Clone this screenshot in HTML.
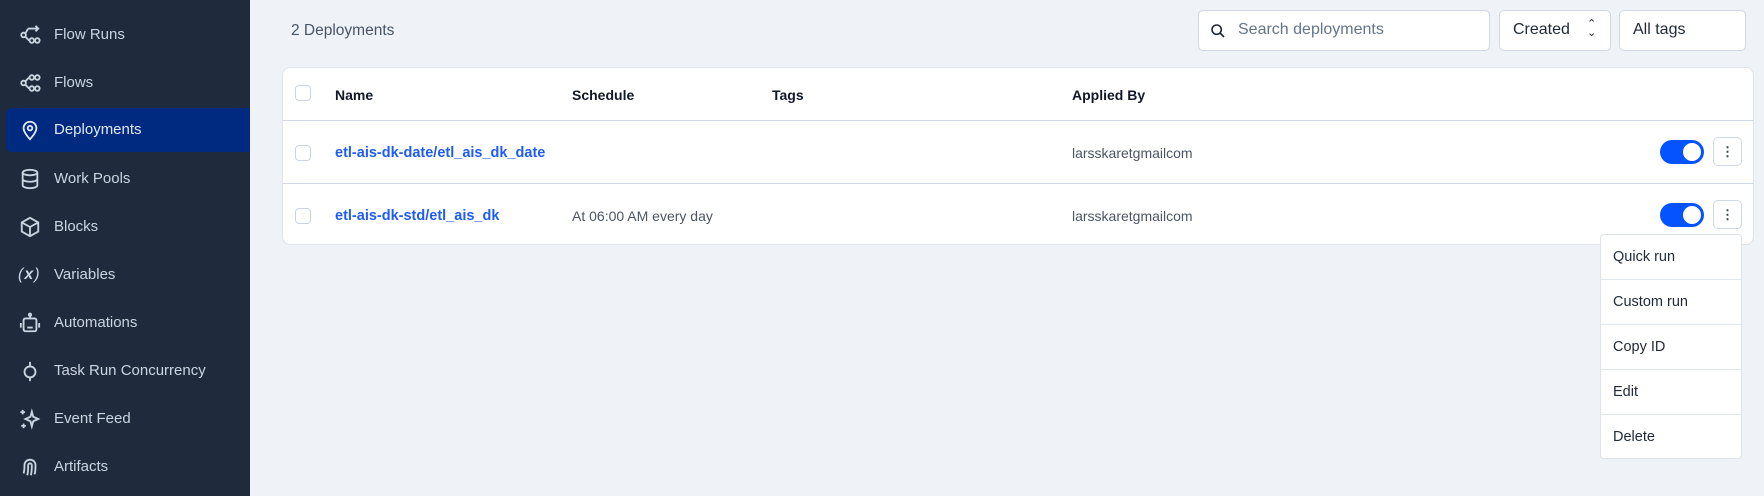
<!DOCTYPE html>
<html><head><style>
*{box-sizing:border-box;margin:0;padding:0}
body{width:1764px;height:496px;overflow:hidden;background:#eff3f8;font-family:"Liberation Sans",sans-serif;position:relative}
.sb{position:absolute;left:0;top:0;width:250px;height:496px;background:#1f2a3c}
.it{position:absolute;left:6px;width:244px;height:44px;color:#cbd5e1;font-size:15px;line-height:44px;padding-left:48px}
.it.act{background:#002a7f;border-radius:6px 0 0 6px;color:#e2e8f0}
.it svg{position:absolute;left:13px;top:11px}
.abs{position:absolute}
.box{position:absolute;background:#fff;border:1px solid #cfd8e3;border-radius:5px;font-size:16px;color:#1f2937}
.card{position:absolute;left:282px;top:67px;width:1472px;height:178px;background:#fff;border:1px solid #dde3ea;border-radius:8px}
.hr{position:absolute;left:0;right:0;height:1px;background:#cfd8e3}
.cb{position:absolute;left:12px;width:16px;height:16px;border:1px solid #cbd5e1;border-radius:4px}
.th{position:absolute;font-size:14px;font-weight:bold;color:#111827}
.td{position:absolute;font-size:14px;color:#4b5563}
.lk{position:absolute;font-size:14.5px;font-weight:bold;color:#1f5bf5}
.tg{position:absolute;width:44px;height:24px;border-radius:12px;background:#0553ff}
.tg::after{content:"";position:absolute;right:3px;top:3px;width:18px;height:18px;border-radius:50%;background:#fff}
.kb{position:absolute;width:29px;height:29px;border:1px solid #cfd8e3;border-radius:5px;background:#fff;color:#334155;font-size:13px;text-align:center;line-height:27px;font-weight:bold}
.menu{position:absolute;left:1600px;top:234px;width:142px;height:225px;background:#fff;border:1px solid #dde3ea;border-radius:4px}
.mi{height:45px;line-height:45px;padding-left:12px;font-size:14.5px;color:#1f2937;border-bottom:1px solid #e2e8f0}
.mi:last-child{border-bottom:none}
</style></head><body>
<div class="sb">
<div class="it" style="top:13px"><svg width="22" height="22" viewBox="0 0 24 24" fill="none" stroke="#cbd5e1" stroke-width="2"><circle cx="5" cy="12" r="2.5"/><circle cx="14" cy="18" r="2.5"/><circle cx="20" cy="18" r="2.5"/><path d="M10 5h11M18 2l3 3-3 3M7 10l3-5M7 14l4 4"/></svg>Flow Runs</div>
<div class="it" style="top:61px"><svg width="22" height="22" viewBox="0 0 24 24" fill="none" stroke="#cbd5e1" stroke-width="2"><circle cx="5" cy="12" r="2.5"/><circle cx="14" cy="6" r="2.5"/><circle cx="20" cy="6" r="2.5"/><circle cx="14" cy="18" r="2.5"/><circle cx="20" cy="18" r="2.5"/><path d="M7 10l4-4M7 14l4 4"/></svg>Flows</div>
<div class="it act" style="top:108px"><svg width="22" height="22" viewBox="0 0 24 24" fill="none" stroke="#e2e8f0" stroke-width="2"><path d="M12 22s-7-7-7-12a7 7 0 0114 0c0 5-7 12-7 12z"/><circle cx="12" cy="10" r="2.5"/></svg>Deployments</div>
<div class="it" style="top:157px"><svg width="22" height="22" viewBox="0 0 24 24" fill="none" stroke="#cbd5e1" stroke-width="2"><ellipse cx="12" cy="5" rx="8" ry="3"/><path d="M4 5v14c0 1.7 3.6 3 8 3s8-1.3 8-3V5M4 12c0 1.7 3.6 3 8 3s8-1.3 8-3"/></svg>Work Pools</div>
<div class="it" style="top:205px"><svg width="22" height="22" viewBox="0 0 24 24" fill="none" stroke="#cbd5e1" stroke-width="2"><path d="M12 2l9 5v10l-9 5-9-5V7z M3 7l9 5 9-5M12 12v10"/></svg>Blocks</div>
<div class="it" style="top:253px"><span class="abs" style="left:12px;top:0;font-size:16px;color:#cbd5e1;font-style:italic;letter-spacing:1px">(<b>x</b>)</span>Variables</div>
<div class="it" style="top:301px"><svg width="22" height="22" viewBox="0 0 24 24" fill="none" stroke="#cbd5e1" stroke-width="2"><rect x="5" y="7" width="14" height="14" rx="2"/><circle cx="12" cy="3" r="1.3"/><path d="M12 4v3M2 12v5M22 12v5M9 12h.01M15 12h.01M9 17h6"/></svg>Automations</div>
<div class="it" style="top:349px"><svg width="22" height="22" viewBox="0 0 24 24" fill="none" stroke="#cbd5e1" stroke-width="2"><circle cx="12" cy="13" r="6"/><path d="M12 2v5M12 19v4"/></svg>Task Run Concurrency</div>
<div class="it" style="top:397px"><svg width="22" height="22" viewBox="0 0 24 24" fill="none" stroke="#cbd5e1" stroke-width="2"><path d="M14 4l1.5 5.5L21 12l-5.5 2.5L14 20l-1.5-5.5L7 12l5.5-2.5z M4 2v5M1.5 4.5h5M5 17v5M2.5 19.5h5"/></svg>Event Feed</div>
<div class="it" style="top:445px"><svg width="22" height="22" viewBox="0 0 24 24" fill="none" stroke="#cbd5e1" stroke-width="2"><path d="M5 19c1-3 1-6 1-9a6 6 0 0112 0c0 4 0 7-1 10M9 21c1-3 1-7 1-11a2 2 0 014 0c0 4 0 7-1 11"/></svg>Artifacts</div>
</div>
<div class="abs" style="left:291px;top:22px;font-size:15.5px;color:#475569">2 Deployments</div>
<div class="box" style="left:1198px;top:10px;width:292px;height:41px"><svg class="abs" style="left:11px;top:12px" width="16" height="16" viewBox="0 0 24 24" fill="none" stroke="#1f2937" stroke-width="2.4"><circle cx="10" cy="10" r="7"/><path d="M15 15l6 6"/></svg><span class="abs" style="left:39px;top:10px;color:#64748b">Search deployments</span></div>
<div class="box" style="left:1499px;top:10px;width:112px;height:41px"><span class="abs" style="left:13px;top:10px">Created</span><span class="abs" style="left:87px;top:9px;font-size:11px;line-height:9px;color:#1f2937">&#8963;<br>&#8964;</span></div>
<div class="box" style="left:1619px;top:10px;width:127px;height:41px"><span class="abs" style="left:13px;top:10px">All tags</span></div>
<div class="card">
<div class="cb" style="top:17px"></div>
<div class="th" style="left:52px;top:19px">Name</div>
<div class="th" style="left:289px;top:19px">Schedule</div>
<div class="th" style="left:489px;top:19px">Tags</div>
<div class="th" style="left:789px;top:19px">Applied By</div>
<div class="hr" style="top:52px"></div>
<div class="cb" style="top:77px"></div>
<div class="lk" style="left:52px;top:77px">etl-ais-dk-date/etl_ais_dk_date</div>
<div class="td" style="left:789px;top:77px">larsskaretgmailcom</div>
<div class="tg" style="left:1377px;top:72px"></div>
<div class="kb" style="left:1430px;top:69px">&#8942;</div>
<div class="hr" style="top:115px"></div>
<div class="cb" style="top:140px"></div>
<div class="lk" style="left:52px;top:140px">etl-ais-dk-std/etl_ais_dk</div>
<div class="td" style="left:289px;top:140px">At 06:00 AM every day</div>
<div class="td" style="left:789px;top:140px">larsskaretgmailcom</div>
<div class="tg" style="left:1377px;top:135px"></div>
<div class="kb" style="left:1430px;top:132px">&#8942;</div>
</div>
<div class="menu"><div class="mi">Quick run</div><div class="mi">Custom run</div><div class="mi">Copy ID</div><div class="mi">Edit</div><div class="mi">Delete</div></div>
</body></html>
